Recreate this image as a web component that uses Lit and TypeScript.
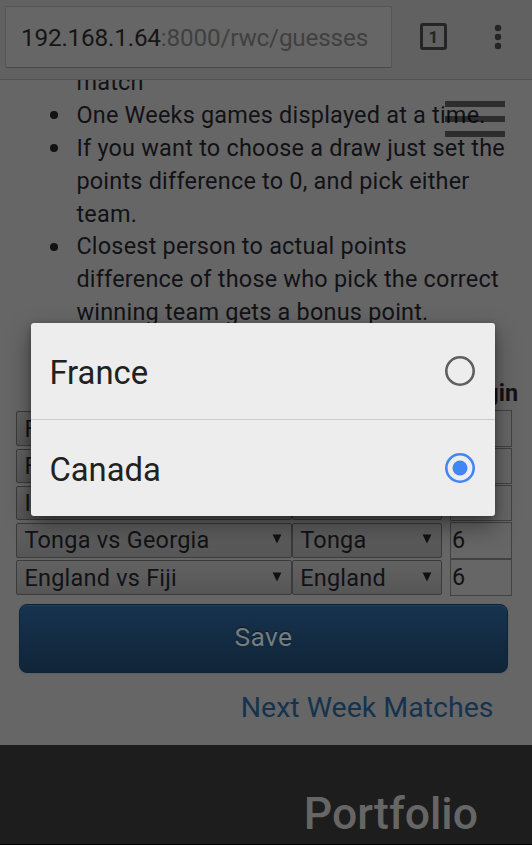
import { LitElement, html, css, svg } from "lit";
import { customElement } from "lit/decorators.js";

interface Row { match: string; pick: string; margin: string; }

const rows: Row[] = [
  { match: "F", pick: "", margin: "" },
  { match: "F", pick: "", margin: "" },
  { match: "I", pick: "", margin: "" },
  { match: "Tonga vs Georgia", pick: "Tonga", margin: "6" },
  { match: "England vs Fiji", pick: "England", margin: "6" },
];

const arrow = html`<svg class="arrow" width="10" height="10" viewBox="0 0 10 10"><path d="M.6 .5H9.4L5 9.5Z" fill="#101114"/></svg>`;

@customElement("app-root")
export class AppRoot extends LitElement {
  static styles = css`
    :host { display: block; position: relative; width: 532px; height: 845px; overflow: hidden;
      background: #666; color: #121216; font-family: Roboto, "Liberation Sans", sans-serif; }
    * { box-sizing: border-box; }
    .bar { height: 80px; background: #616161; border-bottom: 1px solid #525252; display: flex; padding: 6px 0 0 5px; }
    .url { width: 387px; height: 62px; background: #666; border: 1px solid #555; border-bottom: 1px solid #484848;
      border-radius: 2px; padding-left: 15px; font-size: 24.3px; letter-spacing: -.19px; line-height: 62px; white-space: nowrap; color: #404040; }
    .host { color: #151515; }
    .tabs { margin: 17px 0 0 28px; width: 27px; height: 27px; }
    .dots { margin: 17px 0 0 44.5px; }
    .page { height: 665px; overflow: hidden; display: flex; flex-direction: column; }
    ul { margin: -14px 0 0; padding: 0 0 0 76.4px; list-style: none; font-size: 23.45px; line-height: 32.87px; letter-spacing: .22px; white-space: nowrap; }
    li { position: relative; }
    .dot { position: absolute; left: -26px; top: 12.6px; width: 8px; height: 8px; border-radius: 50%; background: #121216; }
    .menu { position: absolute; left: 445px; top: 101px; }
    .head { margin: 47.5px 14px 0 0; height: 33px; line-height: 33px; text-align: right; font-weight: 700; font-size: 23.4px; }
    .grid { padding: .4px 0 0 16.4px; }
    .row { display: flex; height: 37.3px; align-items: center; font-size: 23.45px; letter-spacing: .24px; }
    .sel { height: 34.5px; border: 1px solid #3b3b3b; border-radius: 2px; display: flex; align-items: center;
      justify-content: space-between; padding: 0 9px 0 7px; background: linear-gradient(#626262, #565656); white-space: nowrap; }
    .match { width: 275.8px; }
    .pick { width: 149.8px; }
    .arrow { flex: none; margin-top: -2px; }
    .num { width: 62px; height: 36.6px; margin-left: 8px; border: 1px solid #424242; padding-left: 1px; line-height: 35.5px; }
    .save { flex: none; margin: 8px 24px 0 19px; height: 69px; border: 1px solid #0c2236; border-radius: 8px;
      background: linear-gradient(#16334e, #102538); box-shadow: inset 0 1px 1px #254059, 0 1px 2px #5b5f63;
      color: #777c80; font-size: 26.5px; letter-spacing: .3px; line-height: 63px; text-align: center; text-shadow: 0 -1px 1px #0a1825; }
    .next { margin: 15px 38.5px 0 0; text-align: right; font-size: 28.5px; line-height: 40px; color: #15334e; }
    .foot { height: 100px; background: #1d1d1d; border-bottom: 1px solid #000; padding: 39px 54px 0 0;
      text-align: right; font-size: 44.6px; line-height: 60px; font-weight: 500; color: #666; }
    .dialog { position: absolute; left: 31px; top: 323px; width: 464px; height: 193px; border-radius: 3px;
      background: #ededed; box-shadow: 0 10px 24px rgba(0,0,0,.42), 0 2px 6px rgba(0,0,0,.25); }
    .opt { height: 96px; display: flex; align-items: center; justify-content: space-between; padding: 3px 19px 0 18.4px;
      font-size: 32.8px; color: #212121; }
    .opt + .opt { height: 97px; border-top: 1px solid #cbcbcb; padding-top: 4px; }
    .radio { margin-top: -3px; }
    .opt + .opt .radio { margin-top: -5px; }
  `;

  private line(s: string) { return html`<div><span>${s}</span></div>`; }

  private radio(on: boolean) {
    return html`<svg class="radio" width="32" height="32" viewBox="0 0 32 32">
      <circle cx="16" cy="16" r="13.7" fill="none" stroke=${on ? "#4285f4" : "#5f5f5f"} stroke-width="2.6"/>
      ${on ? svg`<circle cx="16" cy="16" r="7.5" fill="#4285f4"/>` : ""}
    </svg>`;
  }

  render() {
    return html`
      <div class="bar">
        <div class="url"><span class="host">192.168.1.64</span><span class="path">:8000/rwc/guesses</span></div>
        <svg class="tabs" viewBox="0 0 27 27"><rect x="1.5" y="1.5" width="24" height="24" rx="1.5" fill="none" stroke="#252525" stroke-width="3"/>
          <text x="13.3" y="20" text-anchor="middle" font-size="17" font-weight="700" fill="#252525">1</text></svg>
        <svg class="dots" width="12" height="28" viewBox="0 0 12 28" fill="#252525">
          <circle cx="6" cy="5" r="3.2"/><circle cx="6" cy="14" r="3.2"/><circle cx="6" cy="23" r="3.2"/></svg>
      </div>
      <div class="page">
        <ul>
          <li>${this.line("match")}</li>
          <li><i class="dot"></i>${this.line("One Weeks games displayed at a time.")}</li>
          <li><i class="dot"></i>${["If you want to choose a draw just set the", "points difference to 0, and pick either", "team."].map(this.line)}</li>
          <li><i class="dot"></i>${["Closest person to actual points", "difference of those who pick the correct", "winning team gets a bonus point."].map(this.line)}</li>
        </ul>
        <div class="head"><span>Margin</span></div>
        <div class="grid">
          ${rows.map(r => html`<div class="row">
            <div class="sel match"><span>${r.match}</span>${arrow}</div>
            <div class="sel pick"><span>${r.pick}</span>${arrow}</div>
            <div class="num"><span>${r.margin}</span></div>
          </div>`)}
        </div>
        <div class="save"><span>Save</span></div>
        <div class="next"><span>Next Week Matches</span></div>
      </div>
      <div class="foot"><span>Portfolio</span></div>
      <svg class="menu" width="60" height="36" viewBox="0 0 60 36" fill="#000" fill-opacity=".56"><path d="M0 0H60V6H0ZM0 15H60V21H0ZM0 30H60V36H0Z"/></svg>
      <div class="dialog">
        <div class="opt"><span>France</span>${this.radio(false)}</div>
        <div class="opt"><span>Canada</span>${this.radio(true)}</div>
      </div>`;
  }
}
